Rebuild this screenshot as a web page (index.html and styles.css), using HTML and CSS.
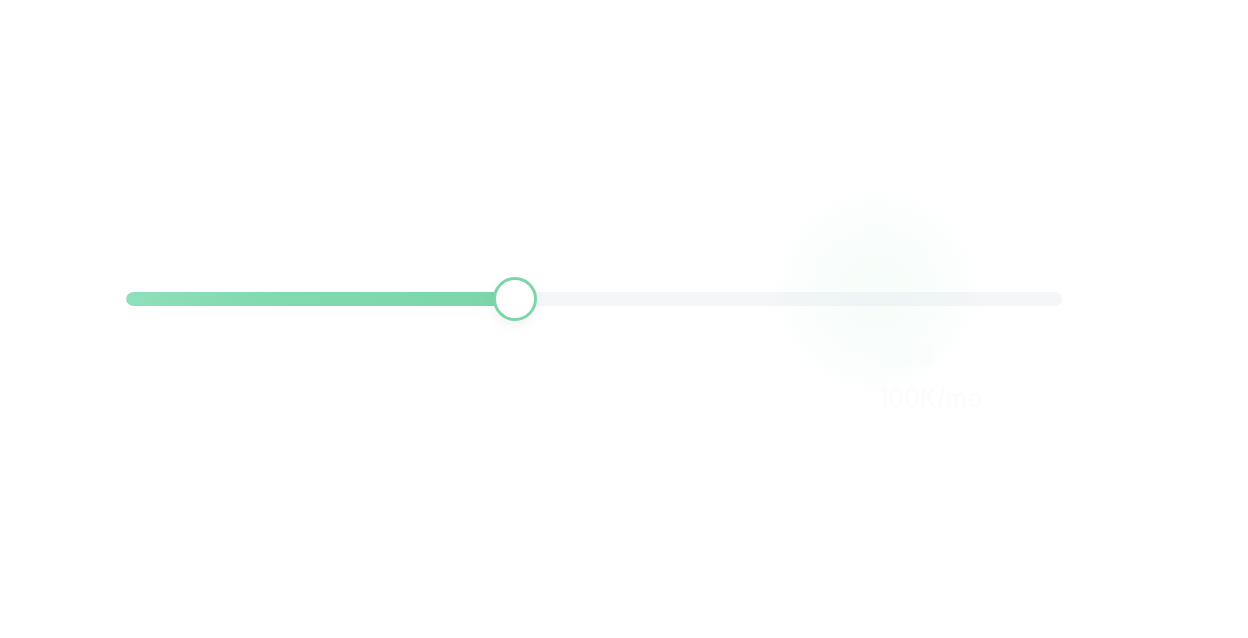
FILE: index.html
```html
<!DOCTYPE html>
<html>
<head>
<meta charset="utf-8">
<link rel="stylesheet" href="styles.css">
</head>
<body>
<main class="stage">
  <div class="slider">
    <div class="track">
      <div class="fill" style="width: 41.6%"></div>
    </div>
    <div class="thumb" style="left: 41.6%"></div>
    <div class="glow"></div>
    <div class="tip">
      <div class="price">$99</div>
      <div class="views">100K/mo</div>
    </div>
  </div>
</main>
</body>
</html>
```
FILE: styles.css
```css
html, body {
  margin: 0;
  background: #ffffff;
  font-family: Inter, "Liberation Sans", sans-serif;
}
.stage {
  height: 638px;
  box-sizing: border-box;
  padding: 292px 186px 0 126px;
}
.slider {
  position: relative;
  height: 14px;
}
.track {
  height: 14px;
  border-radius: 7px;
  background: #f5f6f8;
  overflow: hidden;
}
.fill {
  height: 100%;
  border-radius: 7px;
  background: linear-gradient(90deg, #8fdfbb 0%, #80d9af 40%, #7cd6ab 100%);
}
.thumb {
  position: absolute;
  top: 50%;
  width: 38px;
  height: 38px;
  margin: -22px 0 0 -22px;
  border: 3px solid #7dd5aa;
  border-radius: 50%;
  background: #ffffff;
  box-shadow: 0 4px 10px rgba(60, 80, 70, 0.08);
}
.glow {
  position: absolute;
  left: 640px;
  top: -110px;
  width: 220px;
  height: 220px;
  border-radius: 50%;
  background: radial-gradient(circle, rgba(120, 220, 170, 0.06) 0%, rgba(120, 220, 170, 0.035) 45%, rgba(120, 220, 170, 0) 70%);
  pointer-events: none;
}
.tip {
  position: absolute;
  left: 752px;
  top: 48px;
  display: flex;
  flex-direction: column;
  gap: 14px;
}
.price {
  font-size: 29px;
  font-weight: 700;
  line-height: 30px;
  color: #f9fdfb;
}
.views {
  font-size: 25px;
  font-weight: 400;
  line-height: 28px;
  color: #fcfcfc;
}
```
